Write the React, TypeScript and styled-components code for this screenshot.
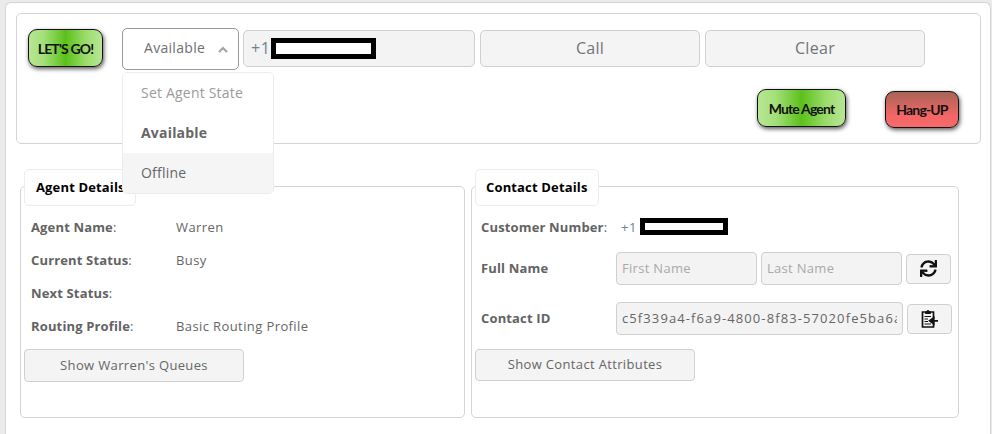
import React from "react";
import styled, { createGlobalStyle } from "styled-components";
import { FaSync } from "react-icons/fa";

const Global = createGlobalStyle`
  html, body { margin: 0; padding: 0; background: #ebebeb; }
  body { font-family: "Open Sans", "Noto Sans", sans-serif; color: #666; overflow: hidden; }
  * { box-sizing: border-box; }
`;

const Page = styled.div`
  width: 992px;
  height: 434px;
  padding: 2px 1px 0 5px;
  overflow: hidden;
`;
const Card = styled.div`
  height: 100%;
  background: #fff;
  border: 1px solid #d4d4d4;
  border-bottom: 0;
  border-radius: 6px 6px 0 0;
  padding: 10px 9px 0 10px;
`;
const TopPanel = styled.section`
  width: 965px;
  height: 131px;
  border: 1px solid #d4d4d4;
  border-radius: 5px;
  padding: 15px 0 0 11px;
`;
const TopRow = styled.div`
  display: flex;
  align-items: flex-start;
`;
const Glossy = styled.button<{ $w: number; $h: number; $red?: boolean; $drop?: number }>`
  width: ${(p) => p.$w}px;
  height: ${(p) => p.$h}px;
  margin-top: ${(p) => p.$drop ?? 0}px;
  border: 1px solid #111;
  border-radius: 9px;
  padding: 0;
  font-family: "Lato", sans-serif;
  font-weight: 700;
  font-size: 14px;
  letter-spacing: -0.85px;
  color: #111;
  background: ${(p) =>
    p.$red
      ? "linear-gradient(180deg, #a86458 0%, #f56666 70%, #f76a6a 100%)"
      : "linear-gradient(90deg, #b8e694 0%, #a4e07a 20%, #5cc01a 50%, #9bdc6c 78%, #b8e694 100%)"};
  box-shadow: 1px 2px 4px rgba(0, 0, 0, 0.65);
`;
const SelectWrap = styled.div`
  position: relative;
  margin: -1px 4px 0 19px;
`;
const SelectBox = styled.div`
  width: 117px;
  height: 42px;
  border: 1px solid #9a9a9a;
  border-radius: 5px;
  background: #fff;
  display: flex;
  align-items: center;
  padding: 0 10px 0 21px;
  justify-content: space-between;
  font-size: 14px;
  letter-spacing: 0.3px;
  color: #6f6f6f;
`;
const SelectValue = styled.span`
  padding-bottom: 3px;
`;
const Menu = styled.div`
  position: absolute;
  z-index: 5;
  left: 0;
  top: 44px;
  width: 152px;
  background: #fff;
  border: 1px solid #ececec;
  border-radius: 5px;
  overflow: hidden;
`;
const MenuItem = styled.div<{ $kind?: "muted" | "active" | "hover" }>`
  height: 40px;
  display: flex;
  align-items: center;
  padding: 0 0 2px 18px;
  font-size: 14px;
  letter-spacing: 0.2px;
  color: ${(p) => (p.$kind === "muted" ? "#9b9b9b" : "#666")};
  font-weight: ${(p) => (p.$kind === "active" ? 700 : 400)};
  background: ${(p) => (p.$kind === "hover" ? "#f5f5f5" : "#fff")};
`;
const Phone = styled.div`
  width: 232px;
  height: 37px;
  margin: 1px 5px 0 0;
  background: #f3f3f3;
  border: 1px solid #d0d0d0;
  border-radius: 5px;
  display: flex;
  align-items: center;
  padding-left: 7px;
  font-size: 16px;
  letter-spacing: 0.6px;
  color: #6f7f96;
`;
const PhonePrefix = styled.span`
  padding-bottom: 2px;
`;
const Redact = styled.span<{ $w: number; $h: number; $gap: number }>`
  display: inline-block;
  flex: none;
  width: ${(p) => p.$w}px;
  height: ${(p) => p.$h}px;
  margin-left: ${(p) => p.$gap}px;
  border: 5px solid #000;
  background: #fff;
`;
const WideButton = styled.button`
  width: 220px;
  height: 37px;
  margin: 1px 5px 0 0;
  padding: 0 0 2px;
  background: #f4f4f4;
  border: 1px solid #d0d0d0;
  border-radius: 5px;
  font-family: inherit;
  font-size: 16px;
  letter-spacing: 0.3px;
  color: #707578;
`;
const ActionRow = styled.div`
  display: flex;
  align-items: flex-start;
  justify-content: flex-end;
  gap: 39px;
  width: 931px;
  margin-top: 19px;
`;
const Panels = styled.div`
  display: flex;
  align-items: flex-start;
  gap: 6px;
  margin: 42px 0 0 4px;
`;
const Panel = styled.section<{ $w: number; $inset: number }>`
  position: relative;
  width: ${(p) => p.$w}px;
  height: 232px;
  border: 1px solid #d4d4d4;
  border-radius: 5px;
  padding: 23px 0 0 ${(p) => p.$inset}px;
  font-size: 13px;
`;
const Tab = styled.div<{ $w: number; $pad: number }>`
  position: absolute;
  left: 3px;
  top: -18px;
  width: ${(p) => p.$w}px;
  height: 37px;
  background: #fff;
  border: 1px solid #ececec;
  border-radius: 5px;
  display: flex;
  align-items: center;
  padding: 0 0 2px ${(p) => p.$pad}px;
  font-size: 13px;
  font-weight: 700;
  letter-spacing: 0.15px;
  color: #000;
  white-space: nowrap;
`;
const InfoRow = styled.div`
  display: flex;
  align-items: center;
  height: 33px;
`;
const Label = styled.span<{ $w?: number }>`
  width: ${(p) => p.$w ?? 145}px;
  flex: none;
  color: #636363;
  font-weight: 700;
  letter-spacing: 0.15px;
`;
const Value = styled.span`
  color: #666;
  letter-spacing: 0.4px;
`;
const Suffix = styled.span`
  font-weight: 400;
`;
const SecondaryButton = styled.button<{ $offset: number; $top: number; $h: number }>`
  display: block;
  width: 220px;
  height: ${(p) => p.$h}px;
  margin: ${(p) => p.$top}px 0 0 -${(p) => p.$offset}px;
  padding: 0 0 2px;
  background: #f4f4f4;
  border: 1px solid #d0d0d0;
  border-radius: 4px;
  font-family: inherit;
  font-size: 13px;
  color: #666;
  letter-spacing: 0.35px;
`;
const CustomerRow = styled.div`
  display: flex;
  align-items: center;
  height: 33px;
  color: #6f7f96;
  letter-spacing: 0.6px;
`;
const FieldRow = styled.div<{ $top: number }>`
  display: flex;
  align-items: center;
  margin-top: ${(p) => p.$top}px;
`;
const FieldLabel = styled(Label)`
  padding-bottom: 2px;
`;
const Field = styled.div<{ $w: number }>`
  width: ${(p) => p.$w}px;
  height: 33px;
  flex: none;
  margin-right: 4px;
  background: #f3f3f3;
  border: 1px solid #d0d0d0;
  border-radius: 4px;
  display: flex;
  align-items: center;
  padding: 0 5px 2px;
`;
const FieldText = styled.span`
  flex: 1;
  overflow: hidden;
  white-space: nowrap;
  color: #666;
  letter-spacing: 1.1px;
`;
const Placeholder = styled.span`
  color: #a9a9a9;
  letter-spacing: 0.3px;
`;
const IconButton = styled.button`
  width: 45px;
  height: 30px;
  flex: none;
  padding: 0;
  background: #f4f4f4;
  border: 1px solid #d0d0d0;
  border-radius: 4px;
  display: flex;
  align-items: center;
  justify-content: center;
  color: #111;
`;

const Chevron = () => (
  <svg width="10" height="7" viewBox="0 0 10 7" fill="none">
    <path d="M1 6L5 2L9 6" stroke="#a5a5a5" strokeWidth="2.2" />
  </svg>
);

const PasteIcon = () => (
  <svg width="17" height="19" viewBox="0 0 17 19" fill="none">
    <path d="M4 3H1.5V18H12.5V3H9.5" stroke="#111" strokeWidth="1.7" />
    <path d="M4.5 4.5V2.5H6C6 1 8 1 8 2.5H9.5V4.5Z" fill="#111" stroke="#111" strokeWidth="1" />
    <path d="M3.5 7.5H10M3.5 10H7M3.5 12.5H7M3.5 15H10" stroke="#111" strokeWidth="1.2" />
    <path d="M9 9.5H17V14H9Z" fill="#f4f4f4" />
    <path d="M17 11.8H10M12.8 8.8L8.6 11.8L12.8 14.8Z" stroke="#111" strokeWidth="1.7" fill="#111" />
  </svg>
);

export default function App() {
  return (
    <Page>
      <Global />
      <Card>
        <TopPanel>
          <TopRow>
            <Glossy $w={75} $h={38}>LET'S GO!</Glossy>
            <SelectWrap>
              <SelectBox>
                <SelectValue>Available</SelectValue>
                <Chevron />
              </SelectBox>
              <Menu>
                <MenuItem $kind="muted">Set Agent State</MenuItem>
                <MenuItem $kind="active">Available</MenuItem>
                <MenuItem $kind="hover">Offline</MenuItem>
              </Menu>
            </SelectWrap>
            <Phone>
              <PhonePrefix>+1</PhonePrefix>
              <Redact $w={105} $h={21} $gap={0} />
            </Phone>
            <WideButton>Call</WideButton>
            <WideButton>Clear</WideButton>
          </TopRow>
          <ActionRow>
            <Glossy $w={89} $h={38}>Mute Agent</Glossy>
            <Glossy $w={74} $h={37} $drop={2} $red>Hang-UP</Glossy>
          </ActionRow>
        </TopPanel>
        <Panels>
          <Panel $w={445} $inset={10}>
            <Tab $w={112} $pad={11}>Agent Details</Tab>
            <InfoRow><Label>Agent Name<Suffix>:</Suffix></Label><Value>Warren</Value></InfoRow>
            <InfoRow><Label>Current Status<Suffix>:</Suffix></Label><Value>Busy</Value></InfoRow>
            <InfoRow><Label>Next Status<Suffix>:</Suffix></Label></InfoRow>
            <InfoRow><Label>Routing Profile<Suffix>:</Suffix></Label><Value>Basic Routing Profile</Value></InfoRow>
            <SecondaryButton $offset={7} $top={7} $h={33}>Show Warren's Queues</SecondaryButton>
          </Panel>
          <Panel $w={488} $inset={9}>
            <Tab $w={124} $pad={10}>Contact Details</Tab>
            <CustomerRow>
              <Label $w={140}>Customer Number<Suffix>:</Suffix></Label>
              +1
              <Redact $w={88} $h={17} $gap={3} />
            </CustomerRow>
            <FieldRow $top={9}>
              <FieldLabel $w={135}>Full Name</FieldLabel>
              <Field $w={141}><Placeholder>First Name</Placeholder></Field>
              <Field $w={141}><Placeholder>Last Name</Placeholder></Field>
              <IconButton><FaSync size={17} /></IconButton>
            </FieldRow>
            <FieldRow $top={17}>
              <FieldLabel $w={135}>Contact ID</FieldLabel>
              <Field $w={287}><FieldText>c5f339a4-f6a9-4800-8f83-57020fe5ba6a</FieldText></Field>
              <IconButton><PasteIcon /></IconButton>
            </FieldRow>
            <SecondaryButton $offset={6} $top={14} $h={32}>Show Contact Attributes</SecondaryButton>
          </Panel>
        </Panels>
      </Card>
    </Page>
  );
}
